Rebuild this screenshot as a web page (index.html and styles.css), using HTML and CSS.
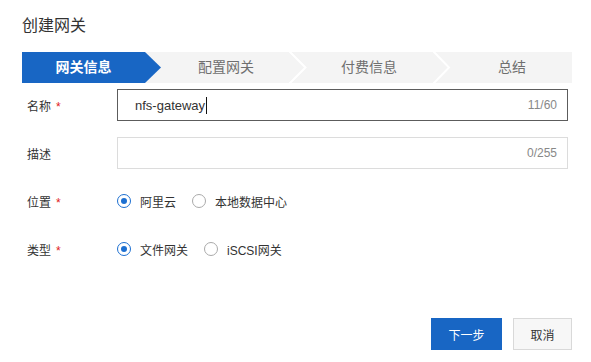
FILE: index.html
```html
<!DOCTYPE html>
<html lang="zh">
<head>
<meta charset="utf-8">
<title>创建网关</title>
<link rel="stylesheet" href="styles.css">
</head>
<body>
<div class="dialog">
  <h1 class="title">创建网关</h1>
  <div class="steps">
    <div class="step active">网关信息</div>
    <div class="sep"><svg width="21" height="31" viewBox="0 0 21 31"><polygon points="0,0 1,0 17,15.5 1,31 0,31" fill="#1866c4"/></svg></div>
    <div class="step">配置网关</div>
    <div class="sep"><svg width="21" height="31" viewBox="0 0 21 31"><polyline points="2,-1 18.5,15.5 2,32" fill="none" stroke="#fff" stroke-width="2"/></svg></div>
    <div class="step">付费信息</div>
    <div class="sep"><svg width="21" height="31" viewBox="0 0 21 31"><polyline points="3,-1 19,15.5 3,32" fill="none" stroke="#fff" stroke-width="2"/></svg></div>
    <div class="step">总结</div>
  </div>
  <div class="form">
    <div class="row first">
      <div class="label">名称<span class="req">*</span></div>
      <div class="input focused"><span class="value">nfs-gateway</span><span class="caret"></span><span class="count">11/60</span></div>
    </div>
    <div class="row">
      <div class="label">描述</div>
      <div class="input"><span class="value"></span><span class="count">0/255</span></div>
    </div>
    <div class="row">
      <div class="label">位置<span class="req">*</span></div>
      <div class="radios">
        <label class="radio"><span class="dot checked"></span>阿里云</label>
        <label class="radio"><span class="dot"></span>本地数据中心</label>
      </div>
    </div>
    <div class="row">
      <div class="label">类型<span class="req">*</span></div>
      <div class="radios">
        <label class="radio"><span class="dot checked"></span>文件网关</label>
        <label class="radio"><span class="dot"></span>iSCSI网关</label>
      </div>
    </div>
  </div>
  <div class="footer">
    <button class="btn primary">下一步</button>
    <button class="btn">取消</button>
  </div>
</div>
</body>
</html>
```
FILE: styles.css
```css
html, body {
  margin: 0;
  padding: 0;
  background: #fff;
}
body {
  font-family: "Liberation Sans", "Noto Sans CJK SC", sans-serif;
  color: #333;
  width: 591px;
  height: 362px;
  overflow: hidden;
}
.dialog {
  padding: 0 19px 0 22px;
}
.title {
  margin: 0;
  padding-top: 14px;
  font-size: 16px;
  line-height: 24px;
  font-weight: normal;
  color: #333;
}
.steps {
  margin-top: 14px;
  height: 31px;
  display: flex;
  background: #f4f4f4;
  overflow: hidden;
}
.step {
  width: 122px;
  flex: none;
  line-height: 31px;
  text-align: center;
  font-size: 14px;
  color: #6f6f6f;
}
.step.active {
  background: #1866c4;
  color: #fff;
  font-weight: bold;
  width: 123px;
  margin-right: -1px;
}
.sep {
  flex: 1;
  height: 31px;
  overflow: visible;
}
.sep svg {
  display: block;
  overflow: visible;
}
.form {
  margin-top: 6px;
  display: flex;
  flex-direction: column;
  gap: 16px;
}
.row {
  display: flex;
  align-items: center;
  height: 32px;
}
.label {
  width: 90px;
  padding-left: 5px;
  font-size: 12px;
  color: #333;
  flex: none;
}
.req {
  color: #e02020;
  margin-left: 5px;
  font-size: 12px;
}
.input {
  width: 451px;
  height: 32px;
  box-sizing: border-box;
  border: 1px solid #dcdcdc;
  display: flex;
  align-items: center;
  padding: 0 10px 0 17px;
}
.input.focused {
  border-color: #5c5c5c;
}
.value {
  font-size: 13px;
  color: #333;
}
.caret {
  width: 0;
  height: 17px;
  border-left: 1px solid #111;
  margin-left: 1px;
}
.count {
  margin-left: auto;
  font-size: 12px;
  color: #888;
}
.radios {
  display: flex;
  align-items: center;
  gap: 16px;
  font-size: 12px;
}
.radio {
  display: flex;
  align-items: center;
  gap: 9px;
  color: #333;
}
.dot {
  width: 14px;
  height: 14px;
  box-sizing: border-box;
  border: 1px solid #aaa;
  border-radius: 50%;
  display: flex;
  align-items: center;
  justify-content: center;
}
.dot.checked {
  border-color: #1c6fd1;
}
.dot.checked::before {
  content: "";
  width: 6px;
  height: 6px;
  border-radius: 50%;
  background: #1c6fd1;
}
.footer {
  margin-top: 53px;
  display: flex;
  justify-content: flex-end;
  gap: 11px;
}
.btn {
  height: 32px;
  box-sizing: border-box;
  font-family: "Liberation Sans", "Noto Sans CJK SC", sans-serif;
  font-size: 12px;
  border: 1px solid #d9d9d9;
  background: #f7f7f7;
  color: #333;
  padding: 0;
  width: 59px;
}
.btn.primary {
  width: 71px;
  background: #1866c4;
  border-color: #1866c4;
  color: #fff;
}
```
